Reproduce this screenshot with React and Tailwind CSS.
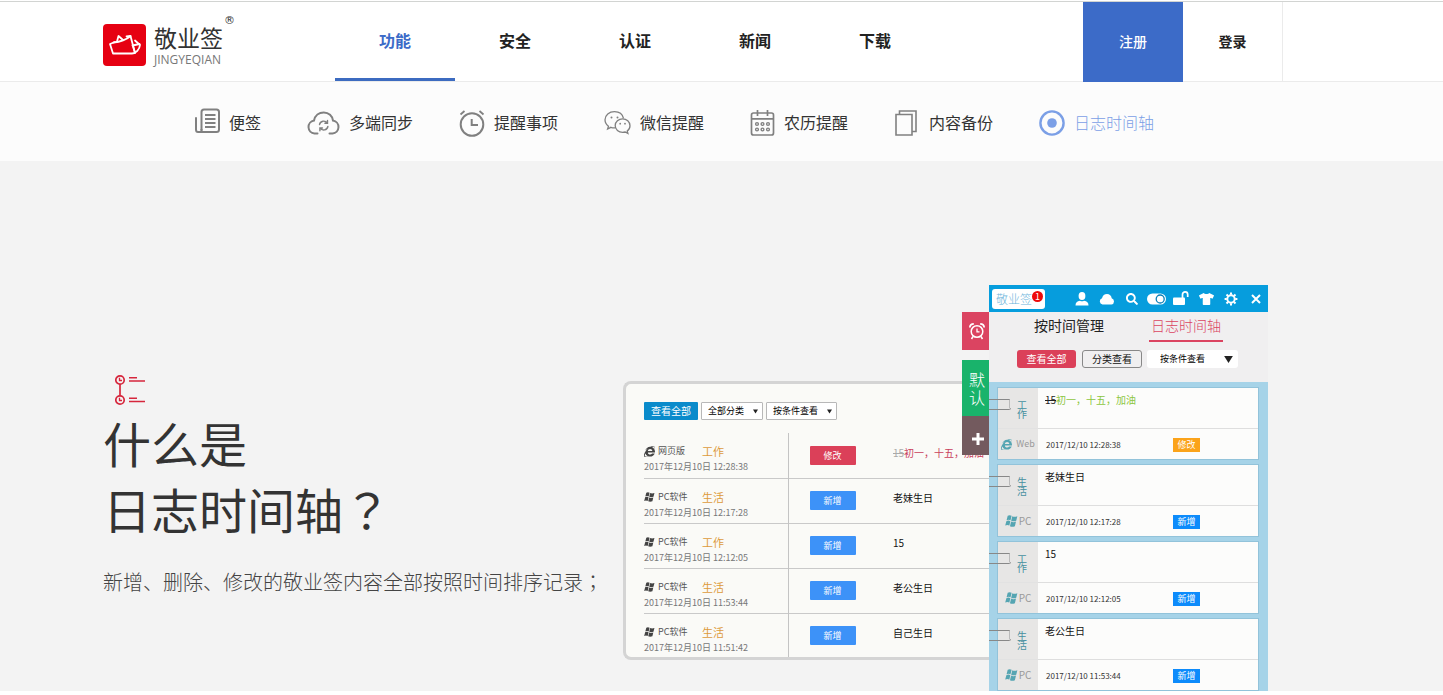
import { FaSearch, FaTshirt, FaInternetExplorer } from 'react-icons/fa';

const navItems = ['功能', '安全', '认证', '新闻', '下载'];

const logs = [
  { source: 'web', type: '工作', date: '2017年12月10日 12:28:38', action: '修改', old: '15', text: '初一，十五，加油' },
  { source: 'pc', type: '生活', date: '2017年12月10日 12:17:28', action: '新增', text: '老妹生日' },
  { source: 'pc', type: '工作', date: '2017年12月10日 12:12:05', action: '新增', text: '15' },
  { source: 'pc', type: '生活', date: '2017年12月10日 11:53:44', action: '新增', text: '老公生日' },
  { source: 'pc', type: '生活', date: '2017年12月10日 11:51:42', action: '新增', text: '自己生日' }
];

const notes = [
  { source: 'web', type: '工作', date: '2017/12/10 12:28:38', action: '修改', old: '15', text: '初一，十五，加油' },
  { source: 'pc', type: '生活', date: '2017/12/10 12:17:28', action: '新增', text: '老妹生日' },
  { source: 'pc', type: '工作', date: '2017/12/10 12:12:05', action: '新增', text: '15' },
  { source: 'pc', type: '生活', date: '2017/12/10 11:53:44', action: '新增', text: '老公生日' }
];

const NoteIcon = () => (
  <svg className="w-[26px] h-[30px]" viewBox="0 0 26 30" fill="none" stroke="currentColor" strokeWidth="2">
    <path d="M7.500 22V4q0-2.500 2.500-2.500h12.500q2.500 0 2.500 2.500v17.500q0 2.500-2.500 2.500H4q-2 0-2-2.500V10" strokeLinecap="round" />
    <path d="M7.500 21v3" />
    <path d="M11 7h10.500M11 11h10.500M11 15h10.500M11 19h10.500" strokeWidth="1.800" />
  </svg>
);

const CloudSyncIcon = () => (
  <svg className="w-[33px] h-[26px]" viewBox="0 0 33 26" fill="none" stroke="currentColor" strokeWidth="2" strokeLinecap="round">
    <path d="M10.500 23.500H7.500a6.500 6.500 0 0 1-.500-12.900C8 5.500 12 2.500 16.800 2.500c5 0 8.600 3.600 9.200 8.100a6.500 6.500 0 0 1-.500 12.900h-3" />
    <path d="M12.500 14.500a4.300 4.300 0 0 1 7.700-1.500M20.900 16.500a4.300 4.300 0 0 1-7.700 1.700M20.500 10.500v2.700h-2.600M12.900 20.700V18h2.600" strokeWidth="1.400" />
  </svg>
);

const AlarmIcon = () => (
  <svg className="w-[26px] h-[28px]" viewBox="0 0 26 28" fill="none" stroke="currentColor" strokeWidth="2">
    <circle cx="13" cy="15.500" r="11.300" />
    <path d="M12.700 10v6h6.300" />
    <path d="M1.500 5.500l4-3.500M24.500 5.500l-4-3.500" strokeWidth="1.800" />
  </svg>
);

const WechatIcon = () => (
  <svg className="w-[27px] h-[26px]" viewBox="0 0 27 26" fill="none" stroke="currentColor" strokeWidth="1.300">
    <path d="M19.500 8.300C18.500 4 14.800 1.600 10.500 1.600 5.200 1.600 1 5.100 1 9.800c0 2.700 1.400 4.900 3.500 6.400L3.600 19l3.300-1.700c1.500.500 3.100.700 4.400.500" />
    <path d="M26 15.700c0-4-3.400-6.900-7.400-6.900s-7.400 2.900-7.400 6.800 3.400 6.800 7.400 6.800c.900 0 1.800-.200 2.600-.400l2.700 1.500-.700-2.500c1.700-1.200 2.800-3.100 2.800-5.300z" />
    <g fill="currentColor" stroke="none">
      <circle cx="7.500" cy="7.500" r="1" />
      <circle cx="13.500" cy="7.500" r="1" />
      <circle cx="16.200" cy="13.700" r=".9" />
      <circle cx="21" cy="13.700" r=".9" />
    </g>
  </svg>
);

const CalendarIcon = () => (
  <svg className="w-[25px] h-[26px]" viewBox="0 0 25 26" fill="none" stroke="currentColor" strokeWidth="1.700">
    <rect x="1.500" y="3" width="22" height="22" rx="2" />
    <path d="M1.500 8.800h22M7.500 0v6M17.500 0v6" />
    <g strokeWidth="1.400">
      <circle cx="7" cy="14" r="1.400" />
      <circle cx="12.500" cy="14" r="1.400" />
      <circle cx="18" cy="14" r="1.400" />
      <circle cx="7" cy="19.500" r="1.400" />
      <circle cx="12.500" cy="19.500" r="1.400" />
      <circle cx="18" cy="19.500" r="1.400" />
    </g>
  </svg>
);

const BackupIcon = () => (
  <svg className="w-[26px] h-[26px]" viewBox="0 0 26 26" fill="none" stroke="currentColor" strokeWidth="1.600">
    <path d="M2 4.500h16v20.500H2zM5.500 4.500V1h16.500v20.500h-4" />
  </svg>
);

const TimelineIcon = () => (
  <svg className="w-[26px] h-[26px]" viewBox="0 0 26 26" fill="none" stroke="currentColor" strokeWidth="2.400">
    <circle cx="13" cy="13" r="11.600" />
    <circle cx="13" cy="13" r="4.800" fill="currentColor" stroke="none" />
  </svg>
);

const subNav = [
  { label: '便签', Icon: NoteIcon },
  { label: '多端同步', Icon: CloudSyncIcon },
  { label: '提醒事项', Icon: AlarmIcon },
  { label: '微信提醒', Icon: WechatIcon },
  { label: '农历提醒', Icon: CalendarIcon },
  { label: '内容备份', Icon: BackupIcon },
  { label: '日志时间轴', Icon: TimelineIcon, active: true }
];

const WindowsFlag = ({ className }) => (
  <svg className={className} viewBox="0 0 24 24" fill="currentColor">
    <path d="M5 2.500C7.300 1 9.800 1 12.200 2.500l-2 8.300C7.800 9.400 5.300 9.400 2.900 10.800z" />
    <path d="M13.500 3.300c2.500 1.400 5.500 1.400 9.300 0l-2.100 8.300c-3.400 1.400-6.400 1.400-9.300 0z" />
    <path d="M2.500 12.300c2.600-1.400 5-1.400 7.400 0L8 20.500c-2.500-1.500-5-1.500-7.600 0z" />
    <path d="M11.200 13.100c2.600 1.400 5.700 1.400 9.100 0l-2 8.400c-3.500 1.400-6.400 1.400-9.100 0z" />
  </svg>
);

const UserIcon = () => (
  <svg className="w-[14px] h-[14px]" viewBox="0 0 14 14" fill="currentColor">
    <ellipse cx="7" cy="4" rx="3.400" ry="4" />
    <path d="M.5 13.500c0-3 1.500-4.200 4.500-4.800q2 1.300 4 0c3 .6 4.500 1.800 4.500 4.800z" />
  </svg>
);

const CloudIcon = () => (
  <svg className="w-[16px] h-[14px]" viewBox="0 0 16 14" fill="currentColor">
    <path d="M3.500 12.500a3.200 3.200 0 0 1-.500-6.200C3.500 3.500 5.500 2 8 2s4.500 1.600 4.700 4.300a3.200 3.200 0 0 1-.2 6.200z" />
  </svg>
);

const ToggleIcon = () => (
  <svg className="w-[19px] h-[12px]" viewBox="0 0 19 12">
    <rect x="0" y=".5" width="19" height="11" rx="5.500" fill="currentColor" />
    <circle cx="13.200" cy="6" r="4" fill="#fff" stroke="#0a7fb8" strokeWidth="1.300" />
  </svg>
);

const UnlockIcon = () => (
  <svg className="w-[16px] h-[16px]" viewBox="0 0 16 16" fill="currentColor">
    <rect x="0" y="6.500" width="12" height="7.500" rx="1" />
    <path d="M9.500 7V3.500a2.600 2.600 0 0 1 5.200 0V6" fill="none" stroke="currentColor" strokeWidth="1.700" />
  </svg>
);

const GearIcon = () => (
  <svg className="w-[14px] h-[14px]" viewBox="0 0 14 14" fill="none" stroke="currentColor" strokeWidth="2">
    <circle cx="7" cy="7" r="3.700" />
    <path d="M7 .6v2.200M7 11.200v2.200M.6 7h2.200M11.200 7h2.200M2.500 2.500l1.500 1.500M10 10l1.500 1.500M2.500 11.500L4 10M10 4l1.500-1.500" />
  </svg>
);

const CloseIcon = () => (
  <svg className="w-[10px] h-[10px]" viewBox="0 0 10 10" fill="none" stroke="currentColor" strokeWidth="2">
    <path d="M1 1l8 8M9 1L1 9" />
  </svg>
);

const Header = () => (
  <header className="mt-px border-t border-[#d2d4d2] border-b border-b-[#ebebeb] bg-white">
    <div className="ml-[103px] flex h-[79px] max-w-[1180px] items-start">
      <a href="#" className="flex w-[232px] shrink-0 pt-[22px]">
        <svg className="h-[42px] w-[43px]" viewBox="0 0 43 42">
          <rect width="43" height="42" rx="4" fill="#e60012" />
          <g fill="none" stroke="#fff" strokeWidth="1.800" strokeLinejoin="round" strokeLinecap="round">
            <path d="M14 17.500l1.500-5.500 4.500 4" />
            <path d="M10.500 18.500C17 18 23 16 27.500 12l4.500 17" />
            <path d="M12 18l-5 2 3 9.500h19c4 0 7.500-4 8-8.500l-5-4.500" />
            <path d="M29.500 21.500l7-1.500M32 28.500l-2-6" />
            <path d="M23.500 12.500l4-.5" />
          </g>
        </svg>
        <span className="ml-2 flex flex-col">
          <span className="flex h-7 items-start text-[23px] leading-[26px] text-[#333]">
            敬业签
            <span className="-mt-[11px] ml-px font-['DejaVu_Sans',sans-serif] text-[11px] leading-4">®</span>
          </span>
          <span className="font-['Open_Sans',sans-serif] text-xs leading-4 text-[#777]">JINGYEQIAN</span>
        </span>
      </a>
      <nav className="flex">
        {navItems.map((item, i) => (
          <a
            key={item}
            href="#"
            className={`flex h-[79px] w-[120px] items-center justify-center border-b-[3px] pb-px text-base font-bold ${
              i === 0 ? 'border-[#3c6bc0] text-[#3c6bc8]' : 'border-transparent text-[#222]'
            }`}
          >
            {item}
          </a>
        ))}
      </nav>
      <div className="ml-auto flex">
        <a href="#" className="flex h-20 w-[100px] items-center justify-center bg-[#3c6bc8] pb-[2px] text-sm font-medium text-white">
          注册
        </a>
        <a href="#" className="flex h-[79px] w-[100px] items-center justify-center border-r border-[#ebebeb] pb-[2px] text-sm font-bold text-[#222]">
          登录
        </a>
      </div>
    </div>
  </header>
);

const SubNav = () => (
  <nav className="flex h-[79px] items-center gap-[46px] bg-[#fcfcfc] pl-[194px] pt-[3px]">
    {subNav.map(({ label, Icon, active }) => (
      <a key={label} href="#" className={`flex shrink-0 items-center gap-[9px] ${active ? 'text-[#7b9fe6]' : 'text-[#808080]'}`}>
        <Icon />
        <span className={`pb-[2px] text-base leading-6 ${active ? 'font-light' : 'text-[#333]'}`}>{label}</span>
      </a>
    ))}
  </nav>
);

const Intro = () => (
  <div className="w-[520px] shrink-0 pt-[89px]">
    <svg className="ml-3 h-8 w-8" viewBox="0 0 32 32" fill="none" stroke="#d6263c" strokeWidth="1.700">
      <circle cx="5" cy="6" r="4.200" />
      <circle cx="5" cy="26" r="4.200" />
      <path d="M5 10v12" />
      <path d="M4.500 3.800v2.700H7M4.500 23.800v2.700H7" strokeWidth="1.300" />
      <path d="M14 3.700h8M14 7h16M14 24.200h8M14 27.500h16" strokeWidth="1.500" />
    </svg>
    <h1 className="mt-[3px] text-5xl leading-[66px] text-[#333]">
      什么是
      <br />
      日志时间轴<span className="font-['Noto_Sans_CJK_TC',sans-serif]">？</span>
    </h1>
    <p className="mt-[27px] text-xl leading-7 font-light whitespace-nowrap text-[#444]">
      新增、删除、修改的敬业签内容全部按照时间排序记录<span className="font-['Noto_Sans_CJK_TC',sans-serif]">；</span>
    </p>
  </div>
);

const FilterSelect = ({ label, className, arrow }) => (
  <span className="relative flex">
    <select aria-label={label} className={`appearance-none text-[9px] leading-4 text-black ${className}`}>
      <option>{label}</option>
    </select>
    <svg className={`pointer-events-none absolute ${arrow}`} viewBox="0 0 10 8" fill="#222">
      <path d="M0 0h10L5 8z" />
    </svg>
  </span>
);

const LogPanel = () => (
  <section className="mt-24 h-[279px] w-[366px] shrink-0 overflow-hidden rounded-l-lg border-[3px] border-r-0 border-[#d4d4d4] bg-[#fafaf7] pt-[18px] pl-[18px]">
    <div className="flex gap-[3px]">
      <button className="h-[18px] w-[54px] rounded-[1px] bg-[#0a8bcb] text-[10px] leading-4 text-white">查看全部</button>
      <FilterSelect label="全部分类" className="h-[18px] w-[62px] rounded-[1px] border border-[#b8b8b8] bg-white pl-[6px]" arrow="right-[5px] top-[7px] h-[5px] w-[5px]" />
      <FilterSelect label="按条件查看" className="h-[18px] w-[71px] rounded-[1px] border border-[#b8b8b8] bg-white pl-[6px]" arrow="right-[5px] top-[7px] h-[5px] w-[5px]" />
    </div>
    <table className="mt-[13px] w-full table-fixed border-collapse text-left">
      <tbody>
        {logs.map((log) => (
          <tr key={log.date} className="h-[45px] border-b border-[#c9c9c9] last:border-b-0">
            <td className="w-36 border-r border-[#c4c4c4] p-0 pt-[9px] align-top whitespace-nowrap">
              <div className="flex h-[18px] items-center">
                {log.source === 'web' ? (
                  <FaInternetExplorer className="h-[11px] w-[11px] text-[#444]" />
                ) : (
                  <WindowsFlag className="h-[12px] w-[11px] text-[#444]" />
                )}
                <span className="ml-[3px] w-11 text-[9px] leading-4 text-[#555]">{log.source === 'web' ? '网页版' : 'PC软件'}</span>
                <span className="text-[11px] leading-4 text-[#dd9a3c]">{log.type}</span>
              </div>
              <div className="text-[9px] leading-[14px] text-[#777]">{log.date}</div>
            </td>
            <td className="w-[105px] p-0 pl-[21px]">
              <span
                className={`flex h-[19px] w-[46px] items-center justify-center rounded-[1px] text-[9px] text-white ${
                  log.action === '修改' ? 'bg-[#db4059]' : 'bg-[#3d92f8]'
                }`}
              >
                {log.action}
              </span>
            </td>
            <td className={`p-0 pb-[5px] text-[10px] leading-4 whitespace-nowrap ${log.old ? 'text-[#c9405c]' : 'text-[#111]'}`}>
              {log.old && <del className="text-[#aaa]">{log.old}</del>}
              {log.text}
            </td>
          </tr>
        ))}
      </tbody>
    </table>
  </section>
);

const SideTabs = () => (
  <div className="absolute top-[27px] right-full flex w-[27px] flex-col text-white">
    <button aria-label="提醒" className="flex h-[38px] items-center justify-center bg-[#db4461] pl-[3px]">
      <svg className="h-[18px] w-4" viewBox="0 0 16 18" fill="none" stroke="currentColor" strokeWidth="1.500">
        <circle cx="8" cy="9.500" r="5.800" />
        <path d="M8 6.500v3.300h2.500" strokeWidth="1.300" />
        <path d="M4 14.500L2.500 17M12 14.500l1.500 2.500" />
        <path d="M.8 5.500Q1 2 4.800 1.800M15.200 5.500Q15 2 11.200 1.800" strokeWidth="1.700" />
      </svg>
    </button>
    <button className="mt-[10px] flex h-14 items-center justify-center bg-[#19b36b] pl-[3px] font-light">
      <span className="w-4 text-base leading-[18px] break-all">默认</span>
    </button>
    <button aria-label="添加" className="flex h-[39px] items-center justify-center bg-[#735a5e] pt-[6px] pl-[5px]">
      <svg className="h-3 w-3" viewBox="0 0 12 12" fill="currentColor">
        <path d="M4.500 0h3v4.500H12v3H7.500V12h-3V7.500H0v-3h4.500z" />
      </svg>
    </button>
  </div>
);

const NoteCard = ({ note }) => (
  <article className="relative flex h-[73px] border border-[#92c3da]">
    <svg className="absolute top-[11px] -left-[9px] h-[11px] w-[22px]" viewBox="0 0 22 11" fill="none" stroke="#888" strokeWidth="1">
      <path d="M0 .5h20.500v1M0 10.500h20.500l1.500-1" />
      <path d="M20.500 1v8.500" stroke="#bbb" />
    </svg>
    <div className="flex w-10 shrink-0 flex-col bg-[#e7e6e5]">
      <div className="flex h-10 justify-end pt-[12px] pr-[11px]">
        <span className="w-[10px] text-[10px] leading-[9px] break-all text-[#4890a0]">{note.type}</span>
      </div>
      <div className="flex h-[31px] items-center justify-center border-t border-[#e2e2e2] text-[#55a5b2]">
        {note.source === 'web' ? <FaInternetExplorer className="h-[11px] w-[11px]" /> : <WindowsFlag className="h-[14px] w-[13px]" />}
        <span className={`leading-4 text-[#999] ${note.source === 'web' ? 'ml-1 text-[9px]' : 'ml-px text-[10px]'}`}>
          {note.source === 'web' ? 'Web' : 'PC'}
        </span>
      </div>
    </div>
    <div className="flex min-w-0 flex-1 flex-col bg-[#fcfcfb]">
      <p className={`h-10 pt-1 pl-[7px] text-[10px] leading-4 ${note.old ? 'text-[#8cc63f]' : 'text-[#111]'}`}>
        {note.old && <del className="text-[#222]">{note.old}</del>}
        {note.text}
      </p>
      <div className="flex h-[31px] items-center border-t border-[#dedede] pt-[2px] pl-2">
        <span className="w-[127px] text-[8px] leading-4 text-[#333]">{note.date}</span>
        <span
          className={`flex h-[14px] w-[27px] items-center justify-center text-[9px] text-white ${
            note.action === '修改' ? 'bg-[#fba31a]' : 'bg-[#0d8bfb]'
          }`}
        >
          {note.action}
        </span>
      </div>
    </div>
  </article>
);

const DesktopApp = () => (
  <section className="relative w-[279px] shrink-0">
    <SideTabs />
    <div className="flex h-[27px] items-center bg-[#069ddd] pl-[3px] text-white">
      <div className="relative h-[20px] w-[53px] rounded-[3px] bg-white pl-1 text-[12px] leading-[20px] font-light text-[#6bb4da]">
        敬业签
        <span className="absolute top-[2px] right-[2px] flex h-[11px] w-[11px] items-center justify-center rounded-full bg-[#ee0a0a] text-[9px] leading-none font-normal text-white">
          1
        </span>
      </div>
      <div className="ml-[25px] flex flex-1 items-center *:flex *:flex-1 *:justify-center">
        <button aria-label="用户"><UserIcon /></button>
        <button aria-label="云端"><CloudIcon /></button>
        <button aria-label="搜索"><FaSearch className="h-[12px] w-[12px]" /></button>
        <button aria-label="开关"><ToggleIcon /></button>
        <button aria-label="锁定"><UnlockIcon /></button>
        <button aria-label="皮肤"><FaTshirt className="h-[14px] w-[15px]" /></button>
        <button aria-label="设置"><GearIcon /></button>
        <button aria-label="关闭"><CloseIcon /></button>
      </div>
    </div>
    <div className="h-[70px] bg-[#f0eff0]">
      <div className="flex pl-[45px] text-sm text-[#222]">
        <button className="h-[30px] pb-1 leading-[26px]">按时间管理</button>
        <button className="ml-[45px] h-[30px] border-b-2 border-[#db4461] px-[2px] pb-[2px] leading-[26px] font-light text-[#db4461]">日志时间轴</button>
      </div>
      <div className="mt-2 flex pl-[28px]">
        <button className="h-[18px] w-[59px] rounded-[3px] bg-[#db4059] text-[10px] leading-4 text-white">查看全部</button>
        <button className="mr-[5px] ml-[6px] h-[18px] w-[60px] rounded-[3px] border border-[#888] text-[10px] leading-4 text-[#111]">分类查看</button>
        <FilterSelect label="按条件查看" className="h-[18px] w-[91px] rounded-[3px] bg-white pl-[13px]" arrow="right-[5px] top-[6px] h-[7px] w-[9px]" />
      </div>
    </div>
    <div className="flex flex-col gap-1 bg-[#a6d3e8] pt-[5px] pr-[9px] pl-2">
      {notes.map((note) => (
        <NoteCard key={note.date} note={note} />
      ))}
    </div>
  </section>
);

const App = () => {
  return (
    <div className="overflow-hidden bg-white font-['Noto_Sans_CJK_SC',sans-serif]">
      <Header />
      <SubNav />
      <main className="flex items-start bg-[#f3f3f3] pt-[124px] pl-[103px]">
        <Intro />
        <LogPanel />
        <DesktopApp />
      </main>
    </div>
  );
};

export default App;
